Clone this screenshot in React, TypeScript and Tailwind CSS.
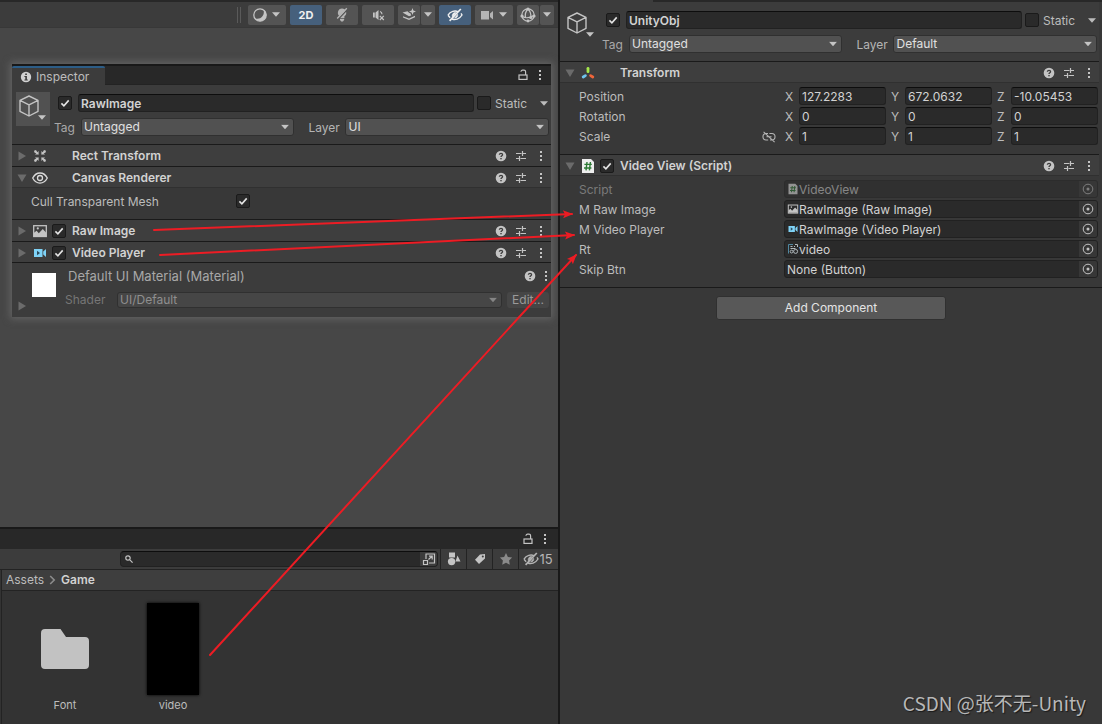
import React, { useId } from "react";
import clsx from "clsx";

/* ---------- icons ---------- */

const Triangle = ({ open }: { open?: boolean }) => (
  <svg width="10" height="10" viewBox="0 0 10 10" fill="#6b6b6b">
    <path d={open ? "M0.5 1.5h9L5 9z" : "M1.5 0.5v9L9 5z"} />
  </svg>
);

const Caret = ({ className }: { className?: string }) => (
  <svg
    width="8"
    height="5"
    viewBox="0 0 8 5"
    fill="currentColor"
    className={clsx("pointer-events-none shrink-0", className)}
  >
    <path d="M0 0.3h8L4 4.7z" />
  </svg>
);

const CubeIcon = () => (
  <svg width="22" height="22" viewBox="0 0 22 22" fill="none" stroke="#c4c4c4" strokeWidth="1.4" strokeLinejoin="round">
    <path d="M11 1 20 5.4v11L11 21l-9-4.6v-11zM2 5.4l9 4.4 9-4.4M11 9.8V21" />
  </svg>
);

const HelpIcon = () => (
  <svg width="12" height="12" viewBox="0 0 12 12">
    <circle cx="6" cy="6" r="5.3" fill="#c4c4c4" />
    <path d="M4.4 4.7C4.4 3 7.6 3 7.6 4.8 7.6 5.8 6 5.9 6 7.1" fill="none" stroke="#3c3c3c" strokeWidth="1.3" />
    <rect x="5.3" y="8" width="1.4" height="1.3" fill="#3c3c3c" />
  </svg>
);

const PresetIcon = () => (
  <svg width="12" height="12" viewBox="0 0 12 12" stroke="#c4c4c4" strokeWidth="1.2" fill="none">
    <path d="M1 3.5h5.5M7.5 1v5M7.5 3.5H11M1 8.5h3M4.5 6v5M5.5 8.5H11" />
  </svg>
);

const DotsIcon = () => (
  <svg width="12" height="12" viewBox="0 0 12 12" fill="#c4c4c4">
    <path d="M5 1h2v2H5zM5 5h2v2H5zM5 9h2v2H5z" />
  </svg>
);

const LockIcon = () => (
  <svg width="12" height="12" viewBox="0 0 12 12" fill="none" stroke="#c4c4c4" strokeWidth="1.2">
    <rect x="2" y="6" width="8" height="4.4" />
    <path d="M8.6 6V2.8a1.6 1.6 0 0 0-1.6-1.6H5.6A1.6 1.6 0 0 0 4 2.8" />
  </svg>
);

const PictureIcon = ({ size = 16 }: { size?: number }) => (
  <svg width={size} height={size} viewBox="0 0 16 16">
    <rect x="1.7" y="2.7" width="12.6" height="10.8" fill="none" stroke="#c4c4c4" strokeWidth="1.3" />
    <path d="M2 13V9.8l2.6-2 2.2 2.4L10.8 6 14 9.4V13z" fill="#c4c4c4" />
    <circle cx="5.8" cy="5.4" r="1.1" fill="#c4c4c4" />
  </svg>
);

const VideoIcon = ({ size = 16 }: { size?: number }) => (
  <svg width={size} height={size} viewBox="0 0 16 16" fill="#7fd3f7">
    <path d="M2 4h8.5v8H2zM11.2 6.6 14 4v8l-2.8-2.6z" />
    <path d="M5 5.8 8 8l-3 2.2z" fill="#2b4a5c" />
  </svg>
);

const ScriptIcon = ({ size = 16 }: { size?: number }) => (
  <svg width={size} height={size} viewBox="0 0 16 16">
    <path d="M2 1h9l3 3v11H2z" fill="#eeeeee" />
    <path d="M7 4 6 12.4M10.4 4l-1 8.4M4.4 6.4h7.4M4 10h7.4" stroke="#2c7a34" strokeWidth="1.4" fill="none" />
  </svg>
);

// four arrowheads around the centre
const RectTransformIcon = () => (
  <svg width="16" height="16" viewBox="0 0 16 16" fill="#c4c4c4">
    <path d="M2 2.8 4 2l2.6 4.600L2.400 4.500zM14 2.800 12 2 9.400 6.600l4.200-2.100zM2 13.200l2 .8 2.600-4.600-4.200 2.100zM14 13.200l-2 .8-2.600-4.600 4.200 2.100z" />
    <path d="M6.600 3v3.600H3zM9.400 3v3.600H13zM6.600 13V9.400H3zM9.400 13V9.400H13z" />
  </svg>
);

const EyeIcon = () => (
  <svg width="16" height="16" viewBox="0 0 16 16" fill="none" stroke="#dadada" strokeWidth="1.3">
    <path d="M0.7 8C4.2 1.3 11.8 1.3 15.3 8 11.8 14.7 4.2 14.7 0.7 8z" />
    <circle cx="8" cy="8" r="2.5" />
  </svg>
);

const TransformIcon = () => (
  <svg width="16" height="16" viewBox="0 0 16 16" strokeLinecap="round" strokeWidth="2.8" fill="none">
    <path d="M8 3.3v3.4" stroke="#a6e84c" />
    <path d="M5.4 10.6 3.2 12" stroke="#6fc5ee" />
    <path d="m10.6 10.6 2.2 1.4" stroke="#f0653a" />
  </svg>
);

const UnlinkIcon = () => (
  <svg width="14" height="12" viewBox="0 0 14 12" fill="none" stroke="#b4b4b4" strokeWidth="1.1">
    <path d="M6 2.5H4a3 3 0 0 0-3 3.2A3 3 0 0 0 4 9h2.2M8 9h2a3 3 0 0 0 3-3.3 3 3 0 0 0-3-3.2H7.4M4.5 5.8h5M1.6 0.8l11 10.4" />
  </svg>
);

const TextureIcon = () => (
  <svg width="12" height="12" viewBox="0 0 12 12" fill="none" stroke="#b0b8bc" strokeWidth="1">
    <path d="M1.5 10.500V1.500H6" stroke="#4f87a0" />
    <path d="M8 1.500h2.500V4" />
    <path d="M3.500 3.500h2M7 3.500h1M3.500 5.500h5" />
    <circle cx="4.600" cy="8.600" r="1.400" />
    <circle cx="8.600" cy="8.400" r="2" />
  </svg>
);

const TargetIcon = () => (
  <svg width="12" height="12" viewBox="0 0 12 12">
    <circle cx="6" cy="6" r="4.8" fill="none" stroke="#c4c4c4" />
    <circle cx="6" cy="6" r="1.5" fill="#c4c4c4" />
  </svg>
);

const InfoIcon = () => (
  <svg width="12" height="12" viewBox="0 0 12 12">
    <circle cx="6" cy="6" r="5.2" fill="#d2d2d2" />
    <path d="M5.2 2.4h1.7V4H5.2zM4.4 5h2.5v3.6h.9v1H4.4v-1h.9V6h-.9z" fill="#3c3c3c" />
  </svg>
);

const SlashedEyeIcon = () => (
  <svg width="16" height="14" viewBox="0 0 16 14" fill="none" stroke="currentColor" strokeWidth="1.4">
    <path d="M1 7.2C3.4 3 8 2.2 11 3.6M14 5.4 15 7c-2.6 4.4-7 5.2-10 4M3.2 9.8 1 7.2" />
    <path d="M2.6 12.8 13.8 1" strokeWidth="1.7" />
    <path d="M5.6 9.2C4.2 6.6 6.4 4 9 4.6zM7.6 10l3-3.8c.6 2.2-.8 4-3 3.8z" fill="currentColor" strokeWidth="0.6" />
  </svg>
);

/* ---------- controls ---------- */

const Checkbox = ({ label, checked }: { label: string; checked?: boolean }) => (
  <span className="relative block size-[14px] shrink-0">
    <input
      type="checkbox"
      aria-label={label}
      defaultChecked={checked}
      className="peer block size-[14px] appearance-none rounded-[2px] border border-[#1a1a1a] bg-[#2a2a2a]"
    />
    <svg
      viewBox="0 0 14 14"
      className="pointer-events-none absolute inset-0 hidden size-[14px] peer-checked:block"
      fill="none"
      stroke="#e4e4e4"
      strokeWidth="1.6"
    >
      <path d="m3.4 7.4 2.5 2.4 4.8-5.4" />
    </svg>
  </span>
);

const Dropdown = ({
  id,
  value,
  className,
  disabled,
}: {
  id: string;
  value: string;
  className: string;
  disabled?: boolean;
}) => (
  <div className={clsx("relative min-w-0", className)}>
    <select
      id={id}
      defaultValue={value}
      disabled={disabled}
      className={clsx(
        "block w-full appearance-none rounded-[3px] border border-[#303030] px-[2px]",
        disabled ? "h-4 bg-[#464646] leading-[14px] text-[#8f8f8f] opacity-100" : "h-[18px] bg-[#515151] leading-4 text-[#e0e0e0]",
      )}
    >
      <option>{value}</option>
    </select>
    <Caret className={clsx("absolute right-[5px] top-1/2 -translate-y-1/2", disabled ? "text-[#858585]" : "text-[#c4c4c4]")} />
  </div>
);

const TextField = ({ label, value, className }: { label: string; value: string; className?: string }) => (
  <input
    type="text"
    aria-label={label}
    defaultValue={value}
    className={clsx(
      "h-[18px] min-w-0 flex-1 rounded-[3px] border border-[#212121] border-t-[#0d0d0d] bg-[#2a2a2a] px-[2px] text-[#d2d2d2] outline-none",
      className,
    )}
  />
);

const IconButton = ({ label, children }: { label: string; children: React.ReactNode }) => (
  <button aria-label={label} className="grid size-3 shrink-0 place-items-center">
    {children}
  </button>
);

/* ---------- inspector ---------- */

const ObjectHeader = ({ name, layer, boxed }: { name: string; layer: string; boxed?: boolean }) => {
  const id = useId();
  return (
    <header className="flex gap-1 bg-[#3c3c3c] pt-[7px] pr-[2px] pb-2 pl-1">
      <button
        aria-label="Object icon"
        className={clsx("relative size-[34px] shrink-0 pl-[2px] pt-[3px]", boxed && "bg-[#515151]")}
      >
        <span className="block size-full">
          <CubeIcon />
        </span>
        <Caret className="absolute bottom-[6px] right-1 text-[#c4c4c4]" />
      </button>
      <div className="flex min-w-0 flex-1 flex-col gap-[6px] pt-[2px]">
        <div className="flex items-center pl-1">
          <Checkbox label="Active" checked />
          <TextField label="Name" value={name} className="ml-[6px] font-semibold" />
          <div className="ml-[3px] flex w-[72px] items-center gap-1 pr-px">
            <Checkbox label="Static" />
            <span className="pt-px">Static</span>
            <button aria-label="Static options" className="ml-auto">
              <Caret />
            </button>
          </div>
        </div>
        <div className="flex items-center">
          <label htmlFor={`${id}tag`} className="w-[27px] pt-[2px] text-[#a8a8a8]">
            Tag
          </label>
          <Dropdown id={`${id}tag`} value="Untagged" className="flex-[214]" />
          <label htmlFor={`${id}layer`} className="ml-[14px] w-[37px] pt-[2px] text-[#b4b4b4]">
            Layer
          </label>
          <Dropdown id={`${id}layer`} value={layer} className="flex-[204]" />
        </div>
      </div>
    </header>
  );
};

const ComponentHeader = ({
  title,
  icon,
  open,
  toggle,
  last,
}: {
  title: string;
  icon: React.ReactNode;
  open?: boolean;
  toggle?: boolean;
  last?: boolean;
}) => (
  <div
    className={clsx(
      "flex h-[22px] items-center border-t border-t-[#1a1a1a] bg-[#3e3e3e] pl-[5px] pr-1",
      open && "shadow-[inset_0_-1px_#303030]",
      last && "shadow-[inset_0_-1px_#1a1a1a]",
    )}
  >
    <button aria-label={`Fold ${title}`} className="mr-[5px]">
      <Triangle open={open} />
    </button>
    {icon}
    <span className="ml-1 mr-[6px] w-[14px]">{toggle && <Checkbox label={title} checked />}</span>
    <h2 className="flex-1 font-semibold text-[#d2d2d2]">{title}</h2>
    <div className="flex gap-2">
      <IconButton label="Help">
        <HelpIcon />
      </IconButton>
      <IconButton label="Presets">
        <PresetIcon />
      </IconButton>
      <IconButton label="More">
        <DotsIcon />
      </IconButton>
    </div>
  </div>
);

const FloatingInspector = () => (
  <section className="mr-[7px] ml-3 mt-9 border-t-2 border-[#191919] bg-[#383838] shadow-[0_0_7px_2px_#636363]">
    <div className="flex h-[19px] items-stretch border-b border-[#232323] bg-[#282828] pr-[5px]">
      <div className="-mb-px flex w-[93px] items-center gap-1 rounded-t-[2px] border-t-2 border-[#2c5d87] bg-[#3c3c3c] pl-2">
        <InfoIcon />
        <span>Inspector</span>
      </div>
      <div className="ml-auto flex items-center gap-[5px]">
        <IconButton label="Lock">
          <LockIcon />
        </IconButton>
        <IconButton label="More">
          <DotsIcon />
        </IconButton>
      </div>
    </div>
    <ObjectHeader name="RawImage" layer="UI" boxed />
    <ComponentHeader title="Rect Transform" icon={<RectTransformIcon />} />
    <ComponentHeader title="Canvas Renderer" icon={<EyeIcon />} open />
    <div className="flex h-[31px] items-start pl-[19px] pt-[6px]">
      <span className="w-[205px]">Cull Transparent Mesh</span>
      <Checkbox label="Cull Transparent Mesh" checked />
    </div>
    <ComponentHeader title="Raw Image" icon={<PictureIcon />} toggle />
    <ComponentHeader title="Video Player" icon={<VideoIcon />} toggle last />
    <div className="flex h-[54px] bg-[#3c3c3c] pr-[2px]">
      <button aria-label="Fold material" className="ml-[5px] mb-[6px] self-end">
        <Triangle />
      </button>
      <div className="ml-[5px] mt-[10px] size-6 bg-white" />
      <div className="ml-[9px] flex-1 pt-1">
        <div className="flex h-[18px] items-center pl-[3px]">
          <h2 className="flex-1 text-[13px] text-[#a8a8a8]">Default UI Material (Material)</h2>
          <div className="-mr-[3px] flex gap-1">
            <IconButton label="Help">
              <HelpIcon />
            </IconButton>
            <IconButton label="More">
              <DotsIcon />
            </IconButton>
          </div>
        </div>
        <div className="mt-[7px] flex h-4 items-center">
          <label htmlFor="shader" className="w-[52px] text-[#767676]">
            Shader
          </label>
          <Dropdown id="shader" value="UI/Default" className="flex-1" disabled />
          <button disabled className="ml-[5px] h-4 w-[42px] rounded-[3px] bg-[#464646] leading-4 text-[#9a9a9a]">
            Edit...
          </button>
        </div>
      </div>
    </div>
  </section>
);

const vectors = [
  { name: "Position", values: ["127.2283", "672.0632", "-10.05453"] },
  { name: "Rotation", values: ["0", "0", "0"] },
  { name: "Scale", values: ["1", "1", "1"] },
];

const refs = [
  { name: "Script", value: "VideoView", icon: <ScriptIcon size={12} />, disabled: true },
  { name: "M Raw Image", value: "RawImage (Raw Image)", icon: <PictureIcon size={12} /> },
  { name: "M Video Player", value: "RawImage (Video Player)", icon: <VideoIcon size={12} /> },
  { name: "Rt", value: "video", icon: <TextureIcon /> },
  { name: "Skip Btn", value: "None (Button)" },
];

const DockedInspector = () => (
  <aside className="min-w-0 flex-[542] bg-[#383838]">
    <div className="h-[2px] bg-[#3c3c3c] pl-[93px]">
      <div className="h-full bg-[#282828]" />
    </div>
    <div className="pr-[3px]">
      <ObjectHeader name="UnityObj" layer="Default" />
      <ComponentHeader title="Transform" icon={<TransformIcon />} open />
      <div className="flex flex-col gap-[2px] pt-1 pr-px pb-[9px] pl-[19px]">
        {vectors.map((v) => (
          <div key={v.name} className="flex h-[18px] items-center">
            <span className="flex w-[206px] items-center justify-between pr-[9px] pt-[2px]">
              {v.name}
              {v.name === "Scale" && <UnlinkIcon />}
            </span>
            <div className="flex min-w-0 flex-1 gap-[5px]">
              {["X", "Y", "Z"].map((axis, i) => (
                <label key={axis} className="flex min-w-0 flex-1 items-center">
                  <span className="w-[14px] pt-[2px]">{axis}</span>
                  <TextField label={`${v.name} ${axis}`} value={v.values[i]} className="pt-px" />
                </label>
              ))}
            </div>
          </div>
        ))}
      </div>
      <ComponentHeader title="Video View (Script)" icon={<ScriptIcon />} open toggle />
      <div className="flex flex-col gap-[2px] pt-1 pr-px pb-[9px] pl-[19px]">
        {refs.map((r) => (
          <div key={r.name} className={clsx("flex h-[18px] items-center", r.disabled && "opacity-50")}>
            <span className="w-[205px] pt-[2px]">{r.name}</span>
            <div className="flex h-[18px] min-w-0 flex-1 items-center rounded-[3px] border border-[#212121] bg-[#2a2a2a] pl-[2px] text-[#d2d2d2]">
              {r.icon}
              <span className="flex-1 pt-[2px]">{r.value}</span>
              <button
                aria-label={`Select ${r.name}`}
                disabled={r.disabled}
                className="grid h-full w-[18px] place-items-center rounded-r-[2px] bg-[#373737]"
              >
                <TargetIcon />
              </button>
            </div>
          </div>
        ))}
      </div>
    </div>
    <div className="border-t border-[#1a1a1a] pt-2">
      <button className="mx-auto block h-6 w-[230px] rounded-[3px] border border-[#303030] bg-[#585858] text-[#e4e4e4]">
        Add Component
      </button>
    </div>
  </aside>
);

/* ---------- scene view ---------- */

const ToolButton = ({
  label,
  active,
  className,
  children,
}: {
  label: string;
  active?: boolean;
  className: string;
  children: React.ReactNode;
}) => (
  <button
    aria-label={label}
    className={clsx(
      "flex h-5 items-center justify-center rounded-[2px]",
      active ? "bg-[#46607c] text-[#efefef]" : "bg-[#545454] text-[#c4c4c4]",
      className,
    )}
  >
    {children}
  </button>
);

const SceneToolbar = () => (
  <div className="flex h-[26px] items-center gap-1 border-b border-[#383838] bg-[#3c3c3c] pr-1">
    <div className="ml-auto mr-[3px] h-4 w-1 border-x border-[#5a5a5a]" />
    <ToolButton label="Draw mode" className="w-[38px] gap-1 pr-[2px]">
      <svg width="16" height="16" viewBox="0 0 16 16">
        <circle cx="8" cy="8" r="6.2" fill="none" stroke="#c4c4c4" strokeWidth="1.3" />
        <path d="M11.4 2.4A6.4 6.4 0 1 1 2.4 11c2.800 1.600 6 .8 7.800-1.400 1.800-2.200 2-5 1.200-7.200z" fill="#c4c4c4" />
      </svg>
      <Caret />
    </ToolButton>
    <ToolButton label="2D" active className="w-8 text-[11px] font-bold">
      2D
    </ToolButton>
    <ToolButton label="Lighting" className="w-8">
      <svg width="16" height="16" viewBox="0 0 16 16" fill="#b4b4b4">
        <path d="M8 1.5a4.3 4.3 0 0 1 2.4 7.8V11H5.700V9.300A4.300 4.300 0 0 1 8 1.500zM6 11.800h4.200v1L9 14.500H7.200L6 12.900z" />
        <path d="M4.500 12 13.800 2" stroke="#545454" strokeWidth="1.2" />
        <path d="M3.200 11.500 12.800 1.200" stroke="#b4b4b4" strokeWidth="1.3" />
      </svg>
    </ToolButton>
    <ToolButton label="Audio" className="w-8">
      <svg width="16" height="16" viewBox="0 0 16 16" fill="#c4c4c4">
        <path d="M3 5.500h1.800v5H3zM5.500 5.500 8.500 3v10l-3-2.500z" />
        <path d="m9.800 8.800 4 4.200m0-4.200-4 4.200M10 4.500c1.400.5 2 1.600 2 2.800" stroke="#c4c4c4" strokeWidth="1.2" fill="none" />
      </svg>
    </ToolButton>
    <div className="flex gap-px">
      <ToolButton label="Effects" className="w-[22px]">
        <svg width="16" height="16" viewBox="0 0 16 16" fill="#c4c4c4">
          <path d="m11.500 1 .9 2.600 2.600.9-2.600.9-.9 2.600-.9-2.600L8 4.500l2.600-.9zM1.500 5.500l5-1.300 1.500 1.600 1.600.6.6 2.200L8 9.200z" />
          <path d="m2 9.200 6 2.200 6-2.600v1.400L8 13l-6-2.600z" />
        </svg>
      </ToolButton>
      <ToolButton label="Effects options" className="w-[14px]">
        <Caret />
      </ToolButton>
    </div>
    <ToolButton label="Scene visibility" active className="w-8">
      <SlashedEyeIcon />
    </ToolButton>
    <ToolButton label="Camera" className="w-[38px] gap-1 pr-[2px]">
      <svg width="16" height="16" viewBox="0 0 16 16" fill="#b4b4b4">
        <path d="M2 4h8v8.500H2zM11 6.500 14 4v8.500L11 10z" />
      </svg>
      <Caret />
    </ToolButton>
    <div className="flex gap-px">
      <ToolButton label="Gizmos" className="w-[22px]">
        <svg width="16" height="16" viewBox="0 0 16 16" fill="none" stroke="#c4c4c4" strokeWidth="1.2">
          <circle cx="8" cy="8" r="6.2" />
          <path d="M8 2C5 5 5 8 5.500 10.500M2 9.500c3 1.500 8 1.500 12-1M8 2c2.600 2.500 3.200 5 2.800 8.500" />
          <g fill="#c4c4c4" stroke="none">
            <circle cx="8" cy="2" r="1.6" />
            <circle cx="2" cy="9" r="1.6" />
            <circle cx="14" cy="9" r="1.6" />
            <circle cx="8" cy="14" r="1.4" />
            <circle cx="10.8" cy="10.5" r="1.6" />
          </g>
        </svg>
      </ToolButton>
      <ToolButton label="Gizmos options" className="w-[14px]">
        <Caret />
      </ToolButton>
    </div>
  </div>
);

/* ---------- project browser ---------- */

const FilterButton = ({ label, children }: { label: string; children: React.ReactNode }) => (
  <button aria-label={label} className="grid h-full w-[26px] place-items-center border-l border-[#232323]">
    {children}
  </button>
);

const ProjectBrowser = () => (
  <section className="flex h-[197px] flex-col border-t-2 border-[#191919] bg-[#333333]">
    <div className="flex h-5 items-center justify-end gap-[5px] bg-[#282828] pr-[7px]">
      <IconButton label="Lock">
        <LockIcon />
      </IconButton>
      <IconButton label="More">
        <DotsIcon />
      </IconButton>
    </div>
    <div className="flex h-[21px] items-center border-b border-[#232323] bg-[#3c3c3c] pl-[120px]">
      <div className="mr-[2px] flex h-4 min-w-0 flex-1 items-center rounded-[4px] border border-[#212121] border-t-[#0d0d0d] bg-[#2a2a2a] pl-1">
        <svg width="8" height="8" viewBox="0 0 8 8" fill="none" stroke="#c4c4c4" strokeWidth="1.2">
          <circle cx="3" cy="3" r="2.2" />
          <path d="m4.6 4.6 3 3" />
        </svg>
        <input type="search" aria-label="Search assets" className="min-w-0 flex-1 px-1 outline-none" />
        <button aria-label="Open search" className="grid h-full w-[17px] place-items-center rounded-r-[3px] bg-[#3c3c3c]">
          <svg width="14" height="14" viewBox="0 0 14 14" fill="none" stroke="#c4c4c4" strokeWidth="1.2">
            <path d="M4 7V2h8.500v9H7M1.500 8.500h4v4h-4zM6.500 7.500 10 4.200M7 4.200h3.200v3.200" />
          </svg>
        </button>
      </div>
      <FilterButton label="Filter by type">
        <svg width="14" height="14" viewBox="0 0 14 14" fill="#c4c4c4">
          <path d="M2 0.500h6v5H2zM10.500 3.500 13.500 9.500H8.500z" />
          <circle cx="4.6" cy="9.6" r="3.7" />
        </svg>
      </FilterButton>
      <FilterButton label="Filter by label">
        <svg width="12" height="12" viewBox="0 0 12 12">
          <path d="M6 1.500 11 1v4.500L5 11 1 6.800z" fill="#c4c4c4" />
          <circle cx="8.8" cy="3.4" r="1" fill="#3c3c3c" />
        </svg>
      </FilterButton>
      <FilterButton label="Favourites">
        <svg width="14" height="14" viewBox="0 0 14 14" fill="#8a8a8a">
          <path d="m7 1 1.900 3.900 4.200.6-3 3 .7 4.300L7 10.800l-3.800 2 .7-4.300-3-3 4.200-.6z" />
        </svg>
      </FilterButton>
      <button className="flex h-full w-10 items-center justify-center border-l border-[#232323] pr-px text-[13px] text-[#b4b4b4]">
        <SlashedEyeIcon />
        15
      </button>
    </div>
    <nav className="ml-px flex h-[21px] items-center gap-[5px] border-b border-l border-[#232323] bg-[#3e3e3e] pl-1">
      <a href="#assets">Assets</a>
      <svg width="7" height="10" viewBox="0 0 7 10" fill="none" stroke="#8c8c8c" strokeWidth="1.6">
        <path d="m1.2 1 4 4-4 4" />
      </svg>
      <a href="#game" className="font-semibold text-[#d2d2d2]">
        Game
      </a>
    </nav>
    <ul className="ml-px flex flex-1 gap-4 border-l border-[#232323] pl-[17px] pt-3 text-[11px]">
      <li className="flex w-[92px] flex-col items-center">
        <div className="grid h-[92px] place-items-center">
          <svg width="48" height="40" viewBox="0 0 48 40" fill="#c2c2c2">
            <path d="M4 0h15.500L25 8h19a4 4 0 0 1 4 4v24a4 4 0 0 1-4 4H4a4 4 0 0 1-4-4V4a4 4 0 0 1 4-4z" />
          </svg>
        </div>
        <span className="mt-[2px]">Font</span>
      </li>
      <li className="flex w-[92px] flex-col items-center">
        <div className="h-[92px] w-[52px] bg-black shadow-[0_0_3px_#000]" />
        <span className="mt-[2px]">video</span>
      </li>
    </ul>
  </section>
);

/* ---------- red annotations ---------- */

const Arrows = () => (
  <svg width="1102" height="724" className="pointer-events-none absolute left-0 top-0" stroke="#ed1c24" strokeWidth="2" strokeLinecap="round">
    <defs>
      <marker id="head" markerUnits="userSpaceOnUse" markerWidth="12" markerHeight="10" refX="10" refY="5" orient="auto">
        <path d="M1 1 11 5 1 9l2-4z" fill="#ed1c24" stroke="none" />
      </marker>
    </defs>
    <path d="M154 230 572 214" markerEnd="url(#head)" />
    <path d="M160 255 574 235" markerEnd="url(#head)" />
    <path d="M210 655 576 255" markerEnd="url(#head)" />
  </svg>
);

export default function App() {
  return (
    <div className="relative flex min-h-screen overflow-hidden bg-[#383838] font-['Inter',sans-serif] text-xs leading-4 text-[#bcbcbc]">
      <main className="flex min-w-0 flex-[558] flex-col border-r-2 border-[#191919] bg-[#474747]">
        <div className="h-[2px] bg-[#282828]" />
        <SceneToolbar />
        <div className="flex-1">
          <FloatingInspector />
        </div>
        <ProjectBrowser />
      </main>
      <DockedInspector />
      <Arrows />
      <p className="absolute bottom-[7px] right-4 font-['Noto_Sans_CJK_SC',sans-serif] text-[19px] leading-7 text-[#b8b8b8] [text-shadow:1px_1px_1px_#1a1a1a]">
        CSDN @张不无-Unity
      </p>
    </div>
  );
}
